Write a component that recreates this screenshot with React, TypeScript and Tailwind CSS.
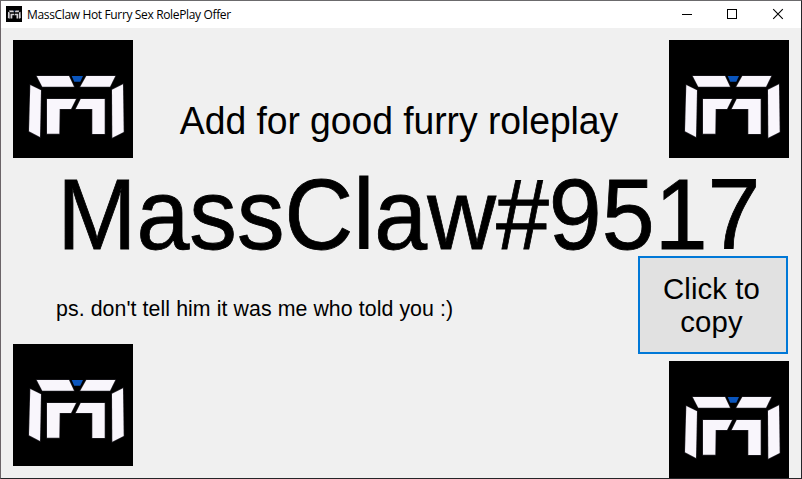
const sans = "font-['Liberation_Sans',Arial,sans-serif]";

function ClawMark({ className }: { className: string }) {
  return (
    <svg viewBox="0 0 120 118" preserveAspectRatio="xMinYMin meet" className={className} aria-hidden="true">
      <g fill="#f9f6fc" stroke="#2b2830" strokeWidth="1.2" paintOrder="stroke">
        <path d="M23.7 36H56L61 46.7H29.3Z" />
        <path d="M73.3 36H102.3L97 46.7H67.3Z" />
        <path d="M17.3 45L28 50.3L27 97L16 91.3Z" />
        <path d="M110 44.3L110.7 92L99.3 97.7L99 49.7Z" />
        <path d="M34 59H63L58 69H46.7L46.3 93.8H34Z" />
        <path d="M67.7 59H91.7V94H79.3V69H62.7Z" />
      </g>
      <path d="M58.7 36H70L67.3 41.7H61.2Z" fill="#0a55bd" />
    </svg>
  );
}

function TitleBar() {
  return (
    <header className="flex h-[27px] shrink-0 items-start bg-white pl-[5px]">
      <svg viewBox="0 0 16 16" className="mt-[5px] size-4 bg-black" aria-hidden="true">
        <g fill="#d3d1d6">
          <path d="M3 4.6H7.4L8 6.3H3.8ZM9.5 4.6H13.2L12.6 6.3H8.8Z" />
          <path d="M2 5.8L3.7 6.6V12.7L1.9 12ZM14.5 5.8L13 6.6V12.7L14.8 12Z" />
          <path d="M4.5 7.7H8.3L7.8 9.3H6.3V12.4H4.5ZM9 7.7H12.3V12.4H10.5V9.3H8.4Z" />
        </g>
        <path d="M7.7 4.6H9.3L9 5.5H8Z" fill="#123d7c" />
      </svg>
      <h1 className="ml-[5px] mt-[6px] whitespace-nowrap font-['Open_Sans','Noto_Sans',sans-serif] text-[12px] leading-4 tracking-[-0.35px] text-black">
        MassClaw Hot Furry Sex RolePlay Offer
      </h1>
      <svg viewBox="0 0 138 27" className="ml-auto h-[27px] w-[138px]" fill="none" stroke="#000" aria-hidden="true">
        <path d="M19 13.5H29M64.5 8.5H73.5V17.5H64.5Z" shapeRendering="crispEdges" />
        <path d="M110.2 8.2L119.8 17.8M119.8 8.2L110.2 17.8" strokeWidth="1.1" />
      </svg>
    </header>
  );
}

export default function App() {
  return (
    <div className={`flex h-[479px] w-[802px] flex-col overflow-hidden border border-t-[#6b6a6c] border-r-[#24252a] border-b-[#242528] border-l-[#6b6468] bg-[#f0f0f0] text-black ${sans}`}>
      <TitleBar />
      <main className="flex min-h-0 flex-1 flex-col pt-3 pr-3 pl-3">
        <section className="flex h-[118px] shrink-0 justify-between">
          <ClawMark className="h-[118px] w-[120px] bg-black" />
          <p className="mt-[60px] mr-[4px] origin-[50%_80%] scale-y-[1.04] whitespace-nowrap text-[37.33px] leading-[42px] tracking-[-0.06px]">
            Add for good furry roleplay
          </p>
          <ClawMark className="h-[118px] w-[120px] bg-black" />
        </section>
        <section className="flex h-[98px] shrink-0 items-start pt-[3px] pl-[41px]">
          <p className="origin-[50%_80%] scale-x-[0.991] scale-y-[1.035] whitespace-nowrap text-[96px] leading-[110px] [-webkit-text-stroke:0.8px_black]">
            MassClaw#9517
          </p>
        </section>
        <section className="flex min-h-0 flex-1 justify-between">
          <div className="flex flex-col">
            <p className="mt-[41px] mb-[23px] ml-[43px] origin-[50%_80%] scale-y-[1.04] whitespace-nowrap text-[21.33px] leading-6 tracking-[0.07px]">
              ps. don't tell him it was me who told you :)
            </p>
            <ClawMark className="h-[122px] w-[120px] shrink-0 bg-black" />
          </div>
          <div className="flex w-[151px] flex-col overflow-hidden">
            <button className="h-[98px] w-[150px] shrink-0 border-2 border-[#0078d7] bg-[#e1e1e1] pr-[17px] pl-[14px] text-[29.33px] leading-[33px] tracking-[0.1px]">
              Click to copy
            </button>
            <ClawMark className="mt-[7px] h-[118px] w-[120px] shrink-0 self-end bg-black" />
          </div>
        </section>
      </main>
    </div>
  );
}
